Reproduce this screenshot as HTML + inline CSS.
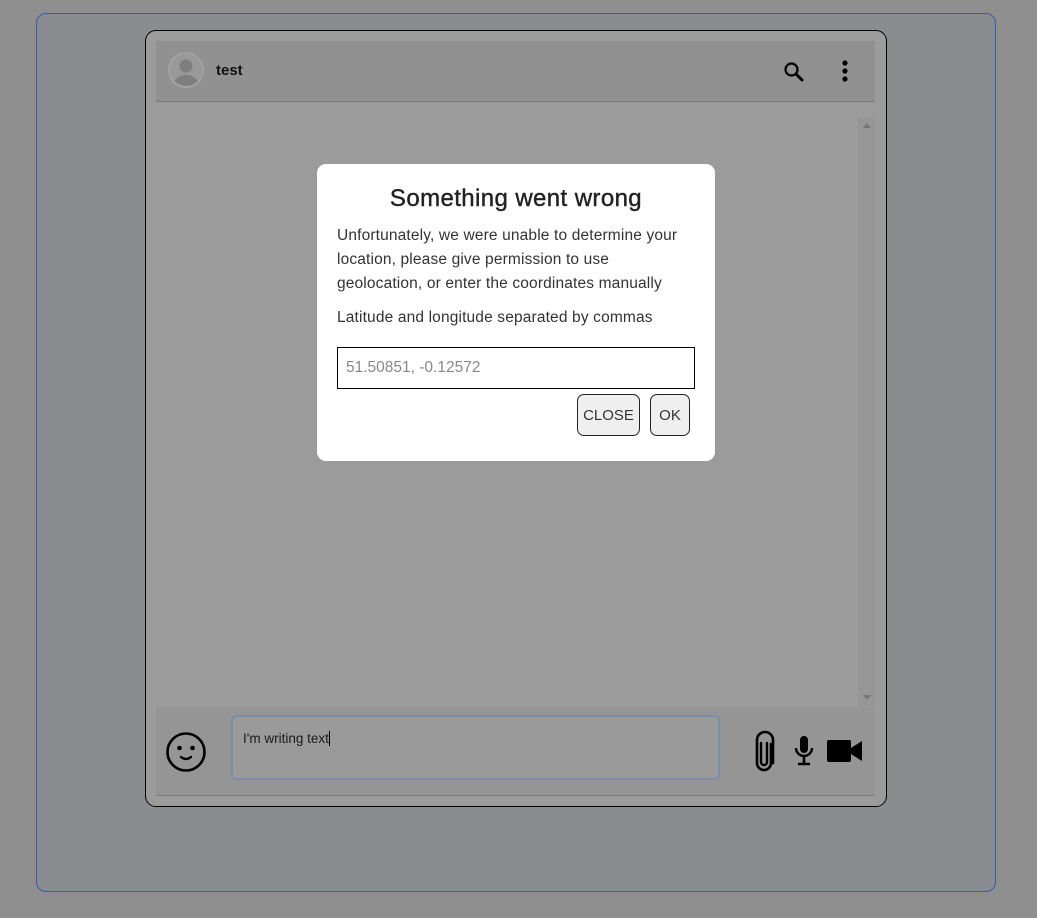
<!DOCTYPE html>
<html><head><style>
*{box-sizing:border-box;margin:0;padding:0}
body{width:1037px;height:918px;background:#8f8f8f;font-family:"Liberation Sans",sans-serif;position:relative;overflow:hidden}
.frame{position:absolute;left:36px;top:13px;width:960px;height:879px;border:1px solid #2e62a8;border-radius:10px;background:#8a8c90}
.phone{position:absolute;left:145px;top:30px;width:742px;height:777px;border:1px solid #000;border-radius:11px;background:#9b9b9b}
.header{position:absolute;left:156px;top:41px;width:719px;height:61px;background:#919191;border-bottom:1px solid #7a7a7a}
.avatar{position:absolute;left:168px;top:52px;width:36px;height:36px;border-radius:50%;background:#999;border:2px solid #a2a2a2;overflow:hidden}
.name{position:absolute;left:216px;top:62px;font-weight:bold;font-size:15px;color:#111}
.scroll{position:absolute;left:858px;top:118px;width:17px;height:588px;background:#969696}
.footer{position:absolute;left:156px;top:707px;width:719px;height:89px;background:#959595;border-bottom:1px solid #7a7a7a}
.ta{position:absolute;left:231px;top:715px;width:489px;height:65px;border:2px solid #7b8ea8;border-radius:5px;background:#9a9a9a;font-size:13.5px;color:#1a1a1a;padding:14px 10px}
.dlg{position:absolute;left:317px;top:164px;width:398px;height:297px;background:#fff;border-radius:9px}
.dlg h1{position:absolute;left:0;width:398px;top:21px;text-align:center;font-size:24px;font-weight:normal;color:#222;letter-spacing:.4px;-webkit-text-stroke:.4px #222}
.dlg p{position:absolute;left:20px;font-size:15.5px;line-height:24px;color:#333;letter-spacing:.15px}
.inp{position:absolute;left:20px;top:183px;width:358px;height:42px;border:1px solid #000;font-size:15.5px;color:#888;padding:11px 8px}
.btn{position:absolute;top:230px;height:42px;border:1px solid #222;border-radius:7px;background:#efefef;font-size:15px;color:#333;text-align:center;line-height:42px}
</style></head><body>
<div class="frame"></div>
<div class="phone"></div>
<div class="header"></div>
<div class="avatar"><svg width="32" height="32" viewBox="0 0 32 32"><circle cx="16" cy="12" r="6.5" fill="#7e7e7e"/><ellipse cx="16" cy="30" rx="12" ry="9" fill="#7e7e7e"/></svg></div>
<div class="name">test</div>
<svg style="position:absolute;left:782px;top:60px" width="24" height="24" viewBox="0 0 24 24"><circle cx="9.5" cy="9.5" r="6" fill="none" stroke="#000" stroke-width="2.2"/><path d="M14 14l6 6" stroke="#000" stroke-width="3" stroke-linecap="round"/></svg>
<svg style="position:absolute;left:838px;top:58px" width="14" height="26" viewBox="0 0 14 26"><circle cx="7" cy="5" r="2.6"/><circle cx="7" cy="13" r="2.6"/><circle cx="7" cy="21" r="2.6"/></svg>
<div class="scroll"></div>
<div style="position:absolute;left:863px;top:123px;width:0;height:0;border-left:4px solid transparent;border-right:4px solid transparent;border-bottom:5px solid #777"></div>
<div style="position:absolute;left:863px;top:695px;width:0;height:0;border-left:4px solid transparent;border-right:4px solid transparent;border-top:5px solid #777"></div>
<div class="footer"></div>
<svg style="position:absolute;left:164px;top:730px" width="44" height="44" viewBox="0 0 44 44"><circle cx="22" cy="22" r="18.5" fill="none" stroke="#000" stroke-width="2.6"/><circle cx="15.5" cy="18" r="2.3"/><circle cx="28.5" cy="18" r="2.3"/><path d="M17 27q5 4 10 0" fill="none" stroke="#000" stroke-width="2.4" stroke-linecap="round"/></svg>
<div class="ta">I'm writing text<span style="border-left:1px solid #000;margin-left:0"></span></div>
<svg style="position:absolute;left:751px;top:730px" width="28" height="44" viewBox="0 0 28 44"><path d="M20 14v19a7 7 0 0 1-14 0V10a8 8 0 0 1 16 0v23" fill="none" stroke="#000" stroke-width="2.6" stroke-linecap="round"/><path d="M10 13v19a3 3 0 0 0 6 0V13" fill="none" stroke="#000" stroke-width="2.4" stroke-linecap="round"/></svg>
<svg style="position:absolute;left:793px;top:735px" width="22" height="32" viewBox="0 0 22 32"><rect x="7" y="1" width="8" height="17" rx="4"/><path d="M3 13a8 8 0 0 0 16 0" fill="none" stroke="#000" stroke-width="2.4"/><path d="M11 21v7M5 29h12" stroke="#000" stroke-width="2.6"/></svg>
<svg style="position:absolute;left:826px;top:738px" width="38" height="26" viewBox="0 0 38 26"><rect x="1" y="2" width="24" height="22" rx="2"/><path d="M25 10l11-7v20l-11-7z"/></svg>
<div class="dlg">
<h1>Something went wrong</h1>
<p style="top:60px;width:355px">Unfortunately, we were unable to determine your location, please give permission to use geolocation, or enter the coordinates manually</p>
<p style="top:142px">Latitude and longitude separated by commas</p>
<div class="inp">51.50851, -0.12572</div>
<div class="btn" style="left:260px;width:63px">CLOSE</div>
<div class="btn" style="left:333px;width:40px">OK</div>
</div>
</body></html>
